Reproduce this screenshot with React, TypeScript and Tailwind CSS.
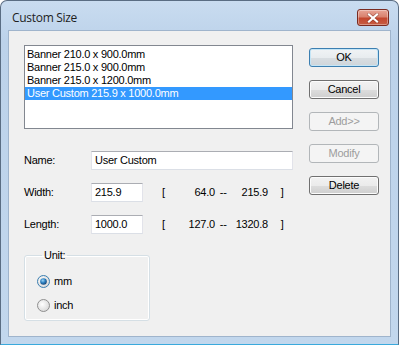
import React from "react";

function Btn({ label, kind }: { label: string; kind: "default" | "normal" | "disabled" }) {
  const base =
    "h-[19px] w-[70px] rounded-[3px] border flex items-center justify-center text-[11px] leading-none";
  if (kind === "disabled")
    return (
      <div className={base + " border-[#b2b6b9] bg-[#f4f4f4] text-[#9d9d9d]"}>{label}</div>
    );
  if (kind === "default")
    return (
      <div
        className={
          base +
          " border-[#3c7fb1] bg-[linear-gradient(#f0f3f5,#e8ecef_50%,#d9dee2_50%,#cfd5da)] text-black shadow-[inset_0_0_0_1px_#c4e5f6]"
        }
      >
        {label}
      </div>
    );
  return (
    <div
      className={
        base +
        " border-[#707070] bg-[linear-gradient(#f2f2f2,#ebebeb_50%,#dddddd_50%,#cfcfcf)] text-black shadow-[inset_0_0_0_1px_#fcfcfc]"
      }
    >
      {label}
    </div>
  );
}

function Radio({ checked }: { checked: boolean }) {
  return (
    <svg width="13" height="13" viewBox="0 0 13 13">
      <defs>
        <radialGradient id="rg" cx="0.4" cy="0.4" r="0.7">
          <stop offset="0" stopColor="#ffffff" />
          <stop offset="1" stopColor="#d4d4d4" />
        </radialGradient>
        <radialGradient id="dot" cx="0.4" cy="0.35" r="0.7">
          <stop offset="0" stopColor="#9bd4f6" />
          <stop offset="0.5" stopColor="#2b7fc0" />
          <stop offset="1" stopColor="#153e6c" />
        </radialGradient>
      </defs>
      <circle cx="6.5" cy="6.5" r="6" fill="url(#rg)" stroke={checked ? "#3c7fb1" : "#8f8f8f"} strokeWidth="1" />
      {checked && <circle cx="6.5" cy="6.5" r="3.3" fill="url(#dot)" />}
    </svg>
  );
}

export default function App() {
  const items = [
    "Banner 210.0 x 900.0mm",
    "Banner 215.0 x 900.0mm",
    "Banner 215.0 x 1200.0mm",
    "User Custom 215.9 x 1000.0mm",
  ];
  return (
    <div className="w-[399px] h-[345px] flex flex-col rounded-t-[7px] border border-[#5a6d83] border-b-[#3aa9dc] bg-[linear-gradient(#c9dcf0,#bcd2ea_40px,#c2d7ed)] px-[7px] pb-[7px] overflow-hidden font-['Liberation_Sans',Arial,sans-serif] text-black">
      {/* title bar */}
      <div className="h-[29px] flex items-start justify-between pl-[4px] pr-[2px] shrink-0">
        <div className="mt-[9px] leading-[16px] text-[12px] font-['Open_Sans',sans-serif] tracking-[-0.3px] text-[#1e1e1e]">
          Custom Size
        </div>
        <div className="mt-[8px] w-[32px] h-[17px] rounded-[3px] border border-[#7a2b21] bg-[linear-gradient(#e8a496,#d9826f_45%,#c4472f_55%,#c65d43)] flex items-center justify-center shadow-[inset_0_0_0_1px_rgba(255,255,255,0.35)]">
          <svg width="12" height="10" viewBox="0 0 12 10">
            <path d="M2 1.5 L10 8.5 M10 1.5 L2 8.5" stroke="#6a2218" strokeWidth="3.4" strokeLinecap="square" opacity="0.5" />
            <path d="M2 1.5 L10 8.5 M10 1.5 L2 8.5" stroke="#ffffff" strokeWidth="2.2" strokeLinecap="square" />
          </svg>
        </div>
      </div>

      {/* client */}
      <div className="flex-1 bg-[#f0f0f0] border border-[#9fb4cc] flex pl-[15px] pt-[14px] text-[11px] tracking-[-0.25px]">
        <div className="w-[269px] flex flex-col">
          <div className="h-[84px] border border-[#828790] bg-white pt-[2px] px-[0px]">
            {items.map((t, i) => (
              <div
                key={t}
                className={
                  "h-[13px] leading-[13px] pl-[2px] whitespace-nowrap " +
                  (i === 3 ? "bg-[#3399ff] text-white" : "")
                }
              >
                {t}
              </div>
            ))}
          </div>

          <div className="mt-[22px] flex items-center h-[19px]">
            <div className="w-[67px]">Name:</div>
            <div className="w-[202px] h-[19px] border border-[#abadb3] border-b-[#dbdfe6] border-x-[#e2e3ea] bg-white pl-[3px] flex items-center">
              User Custom
            </div>
          </div>

          <div className="mt-[13px] flex items-center h-[19px]">
            <div className="w-[67px]">Width:</div>
            <div className="w-[52px] h-[19px] border border-[#abadb3] border-b-[#dbdfe6] border-x-[#e2e3ea] bg-white pl-[3px] flex items-center">
              215.9
            </div>
            <div className="ml-[19px]">[</div>
            <div className="w-[50px] text-right">64.0</div>
            <div className="ml-[5px] w-[8px]">--</div>
            <div className="w-[40px] text-right">215.9</div>
            <div className="ml-[13px]">]</div>
          </div>

          <div className="mt-[13px] flex items-center h-[19px]">
            <div className="w-[67px]">Length:</div>
            <div className="w-[52px] h-[19px] border border-[#abadb3] border-b-[#dbdfe6] border-x-[#e2e3ea] bg-white pl-[3px] flex items-center">
              1000.0
            </div>
            <div className="ml-[19px]">[</div>
            <div className="w-[50px] text-right">127.0</div>
            <div className="ml-[5px] w-[8px]">--</div>
            <div className="w-[40px] text-right">1320.8</div>
            <div className="ml-[13px]">]</div>
          </div>

          <fieldset className="mt-[15px] w-[126px] border border-[#d5dfe5] rounded-[3px] pl-[12px] pb-[8px] shadow-[inset_0_0_0_1px_#ffffff]">
            <legend className="ml-[5px] px-[2px] leading-[12px]">Unit:</legend>
            <div className="mt-[14px] flex items-center h-[13px]">
              <Radio checked />
              <span className="ml-[4px]">mm</span>
            </div>
            <div className="mt-[11px] flex items-center h-[13px]">
              <Radio checked={false} />
              <span className="ml-[4px]">inch</span>
            </div>
          </fieldset>
        </div>

        <div className="ml-[16px] pt-[3px] flex flex-col gap-[13px]">
          <Btn label="OK" kind="default" />
          <Btn label="Cancel" kind="normal" />
          <Btn label="Add>>" kind="disabled" />
          <Btn label="Modify" kind="disabled" />
          <Btn label="Delete" kind="normal" />
        </div>
      </div>
    </div>
  );
}
